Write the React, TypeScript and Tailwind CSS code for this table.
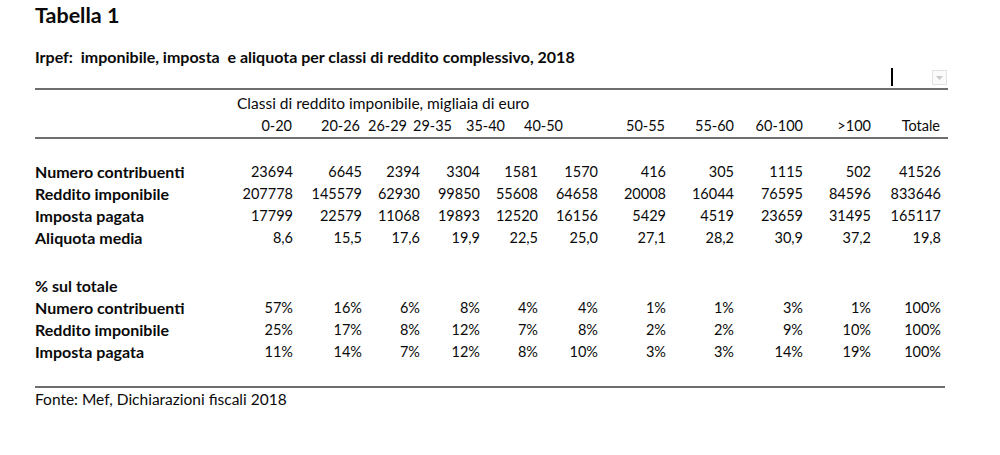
import React from "react";

const cols = "grid-cols-[195px_63px_69px_58px_60px_58px_60px_68px_68px_69px_68px_70px_7px]";

const headers: [string, string][] = [
  ["0-20", "pr-[1px]"],
  ["20-26", "pr-[2px]"],
  ["26-29", "pr-[13px]"],
  ["29-35", "pr-[28px]"],
  ["35-40", "pr-[33px]"],
  ["40-50", "pr-[35px]"],
  ["50-55", "pr-[1px]"],
  ["55-60", "pr-0"],
  ["60-100", "pr-0"],
  [">100", "pr-0"],
  ["Totale", "pr-[1px]"],
];

const rows1: [string, string[]][] = [
  ["Numero contribuenti", ["23694", "6645", "2394", "3304", "1581", "1570", "416", "305", "1115", "502", "41526"]],
  ["Reddito imponibile", ["207778", "145579", "62930", "99850", "55608", "64658", "20008", "16044", "76595", "84596", "833646"]],
  ["Imposta pagata", ["17799", "22579", "11068", "19893", "12520", "16156", "5429", "4519", "23659", "31495", "165117"]],
  ["Aliquota media", ["8,6", "15,5", "17,6", "19,9", "22,5", "25,0", "27,1", "28,2", "30,9", "37,2", "19,8"]],
];

const rows2: [string, string[]][] = [
  ["Numero contribuenti", ["57%", "16%", "6%", "8%", "4%", "4%", "1%", "1%", "3%", "1%", "100%"]],
  ["Reddito imponibile", ["25%", "17%", "8%", "12%", "7%", "8%", "2%", "2%", "9%", "10%", "100%"]],
  ["Imposta pagata", ["11%", "14%", "7%", "12%", "8%", "10%", "3%", "3%", "14%", "19%", "100%"]],
];

function DataRow({ label, values }: { label: string; values: string[] }) {
  return (
    <div className={`grid ${cols} h-[22px] items-center`}>
      <div className="font-bold text-[16px] whitespace-nowrap">{label}</div>
      {values.map((v, i) => (
        <div key={i} className="flex justify-end whitespace-nowrap">
          {v}
        </div>
      ))}
      <div />
    </div>
  );
}

export default function App() {
  return (
    <div
      className="relative w-[1000px] h-[455px] bg-white text-[#0a0a0a] overflow-hidden"
      style={{ fontFamily: "Lato, 'Open Sans', sans-serif" }}
    >
      <div className="flex flex-col pl-[35px] w-[948px] text-[14.5px] leading-[22px]">
        <div className="mt-[3px] h-[25px] text-[21.5px] leading-[25px] font-bold">Tabella 1</div>
        <div className="mt-[18px] h-[22px] text-[16px] leading-[22px] font-bold whitespace-nowrap">
          Irpef:&nbsp; imponibile, imposta&nbsp; e aliquota per classi di reddito complessivo, 2018
        </div>
        <div className="mt-[20px] h-[2px] bg-[#6e6e6e]" />
        <div className={`grid ${cols} mt-[2px] h-[22px] items-center`}>
          <div />
          <div className="col-span-12 pl-[7px] text-[15.5px] whitespace-nowrap">
            Classi di reddito imponibile, migliaia di euro
          </div>
        </div>
        <div className={`grid ${cols} h-[23px] items-center`}>
          <div />
          {headers.map(([h, p]) => (
            <div key={h} className={`flex justify-end whitespace-nowrap ${p}`}>
              {h}
            </div>
          ))}
          <div />
        </div>
        <div className="h-[2px] bg-[#6e6e6e]" />
        <div className="h-[22px]" />
        {rows1.map(([l, v]) => (
          <DataRow key={l} label={l} values={v} />
        ))}
        <div className="h-[26px]" />
        <div className={`grid ${cols} h-[22px] items-center`}>
          <div className="font-bold text-[16px] whitespace-nowrap">% sul totale</div>
        </div>
        {rows2.map(([l, v]) => (
          <DataRow key={l} label={l} values={v} />
        ))}
        <div className="h-[23px]" />
        <div className="h-[2px] w-[910px] bg-[#6e6e6e]" />
        <div className="h-[22px] text-[15.5px] whitespace-nowrap">Fonte: Mef, Dichiarazioni fiscali 2018</div>
      </div>

      {/* cursor */}
      <div className="absolute left-[891px] top-[68px] w-[2px] h-[18px] bg-black" />
      {/* filter dropdown button */}
      <div className="absolute left-[932px] top-[70px] w-[15px] h-[15px] border border-[#e2e2e2] bg-[#fafafa] flex items-center justify-center">
        <svg width="7" height="4" viewBox="0 0 7 4">
          <path d="M0 0 L7 0 L3.5 4 Z" fill="#c8c8c8" />
        </svg>
      </div>
    </div>
  );
}
